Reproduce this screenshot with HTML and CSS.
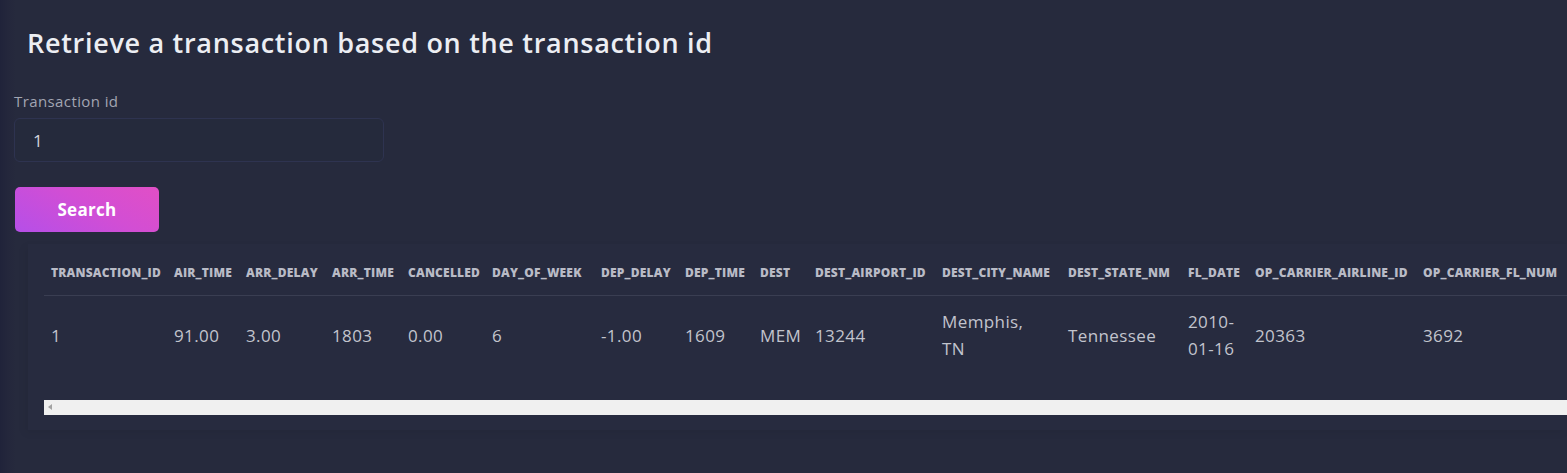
FILE: index.html
```html
<!DOCTYPE html>
<html lang="en">
<head>
<meta charset="utf-8">
<title>Retrieve a transaction</title>
<link rel="stylesheet" href="styles.css">
</head>
<body>
<main class="page">
  <h1 class="title">Retrieve a transaction based on the transaction id</h1>
  <form class="form">
    <label class="label" for="tid">Transaction id</label>
    <input class="input" id="tid" type="text" value="1">
    <button class="btn" type="button">Search</button>
  </form>
  <section class="card">
    <div class="table-wrap">
      <table class="table">
        <colgroup>
          <col style="width:123px"><col style="width:72px"><col style="width:86px"><col style="width:76px"><col style="width:84px"><col style="width:109px"><col style="width:84px"><col style="width:75px"><col style="width:55px"><col style="width:127px"><col style="width:126px"><col style="width:120px"><col style="width:67px"><col style="width:168px"><col style="width:160px">
        </colgroup>
        <thead>
          <tr>
            <th>TRANSACTION_ID</th><th>AIR_TIME</th><th>ARR_DELAY</th><th>ARR_TIME</th><th>CANCELLED</th><th>DAY_OF_WEEK</th><th>DEP_DELAY</th><th>DEP_TIME</th><th>DEST</th><th>DEST_AIRPORT_ID</th><th>DEST_CITY_NAME</th><th>DEST_STATE_NM</th><th>FL_DATE</th><th>OP_CARRIER_AIRLINE_ID</th><th>OP_CARRIER_FL_NUM</th>
          </tr>
        </thead>
        <tbody>
          <tr>
            <td>1</td><td>91.00</td><td>3.00</td><td>1803</td><td>0.00</td><td>6</td><td>-1.00</td><td>1609</td><td>MEM</td><td>13244</td><td><span class="narrow">Memphis, TN</span></td><td>Tennessee</td><td><span class="narrow">2010-01-16</span></td><td>20363</td><td>3692</td>
          </tr>
        </tbody>
      </table>
    </div>
    <div class="scrollbar"><span class="arrow"></span></div>
  </section>
</main>
</body>
</html>
```

FILE: styles.css
```css
html, body {
  margin: 0;
  padding: 0;
}
body {
  width: 1567px;
  height: 473px;
  overflow: hidden;
  background: linear-gradient(to right, #20233a 0px, #24273c 8px, #262a3d 16px, #262a3d 100%);
  font-family: "Open Sans", "Liberation Sans", sans-serif;
  color: #c4c6cf;
}
.page {
  padding: 0 0 0 14px;
}
.title {
  margin: 0;
  padding: 26px 0 0 13px;
  font-size: 27px;
  line-height: 34px;
  font-weight: 600;
  color: #eceef3;
  letter-spacing: 0.7px;
}
.form {
  display: flex;
  flex-direction: column;
  align-items: flex-start;
  padding-top: 31px;
}
.label {
  font-size: 15px;
  line-height: 20px;
  color: #a2a5b2;
  letter-spacing: 0.4px;
}
.input {
  margin-top: 7px;
  box-sizing: border-box;
  width: 370px;
  height: 44px;
  padding: 0 18px;
  background: #252a3c;
  border: 1px solid #2e3350;
  border-radius: 6px;
  font-family: inherit;
  font-size: 17px;
  color: #d2d4db;
  outline: none;
}
.btn {
  margin-top: 25px;
  margin-left: 1px;
  width: 144px;
  height: 45px;
  border: none;
  border-radius: 5px;
  background: linear-gradient(30deg, #b54fe8 0%, #d24ed4 55%, #e14fc6 100%);
  color: #ffffff;
  font-family: inherit;
  font-size: 17px;
  font-weight: 700;
  letter-spacing: 0.3px;
}
.card {
  margin-top: 12px;
  margin-left: 14px;
  padding: 0 0 15px 16px;
  background: #272b3f;
  box-shadow: -3px 3px 8px rgba(0, 0, 0, 0.06);
}
.table-wrap {
  overflow: hidden;
}
.table {
  border-collapse: collapse;
  table-layout: fixed;
  width: 1532px;
}
.table th {
  text-align: left;
  font-size: 12px;
  line-height: 16px;
  font-weight: 800;
  color: #b9bbc6;
  padding: 21px 7px 14px;
  border-bottom: 1px solid #3a3e52;
  white-space: nowrap;
  overflow: visible;
  letter-spacing: 0.2px;
}
.table td {
  text-align: left;
  font-size: 17px;
  line-height: 27px;
  color: #c2c4cd;
  padding: 12px 7px 38px;
  vertical-align: middle;
  letter-spacing: 0.4px;
}
.narrow {
  display: inline-block;
  max-width: 88px;
}
.table td:nth-child(13) .narrow {
  max-width: 52px;
}
.scrollbar {
  position: relative;
  height: 15px;
  background: #f0f0f0;
}
.arrow {
  position: absolute;
  left: 4px;
  top: 4px;
  width: 0;
  height: 0;
  border-top: 3.5px solid transparent;
  border-bottom: 3.5px solid transparent;
  border-right: 4px solid #a3a3a3;
}
```
